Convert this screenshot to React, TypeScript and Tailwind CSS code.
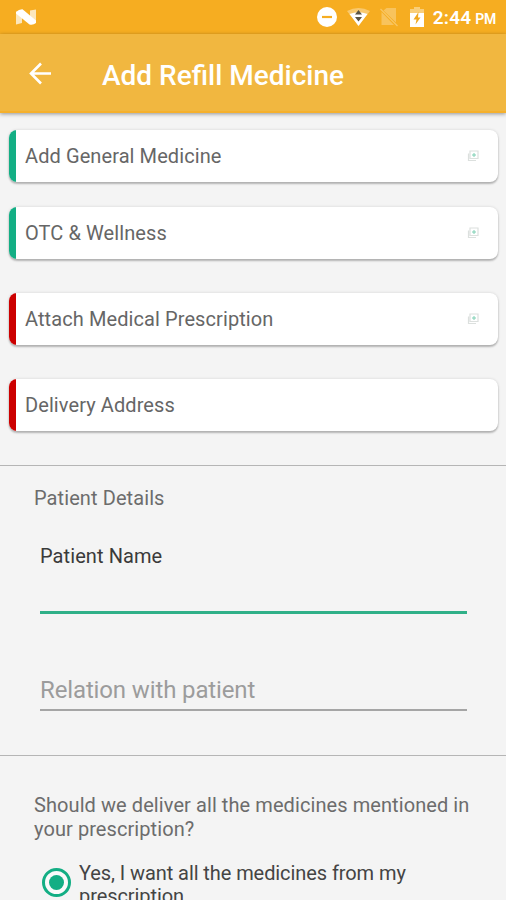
interface ActionCardProps {
  label: string
  required?: boolean
  addable?: boolean
}

const OPTIONAL_ITEMS: ActionCardProps[] = [
  { label: 'Add General Medicine', addable: true },
  { label: 'OTC & Wellness', addable: true },
]

const REQUIRED_ITEMS: ActionCardProps[] = [
  { label: 'Attach Medical Prescription', required: true, addable: true },
  { label: 'Delivery Address', required: true },
]

function StatusBar() {
  return (
    <div className="flex h-[34px] items-center bg-[#f6ad21] pl-4 pr-[10px] text-white">
      <svg width="20" height="16" viewBox="0 0 20 16">
        <path d="M0 2.5 6 4v10l-6 1.5zM14 1.500l6-1v13l-6-3z" fill="#fff" opacity="0.7" />
        <path d="M0 3Q3 0 6.500 .2L20 11.500V14Q17 16.500 13.500 15.500L0 4.500z" fill="#fff" />
      </svg>
      <div className="ml-auto flex items-center">
        <svg width="20" height="20" viewBox="0 0 20 20">
          <circle cx="10" cy="10" r="10" fill="#fff" />
          <path d="M5 8.9h10v2.2H5z" fill="#f6ad21" />
        </svg>
        <svg className="ml-[10px]" width="23" height="20" viewBox="0 0 23 20">
          <path d="M0 4Q11.500-2 23 4L11.500 18.500z" fill="#fff" opacity="0.35" />
          <path d="M2.500 7Q11.500 3.500 20.500 7L11.500 19z" fill="#fff" />
          <path d="M11.500 3l3.500 4.500H8zM8 10h7l-3.500 4.500z" fill="#5b5546" />
        </svg>
        <svg className="ml-[10px]" width="18" height="20" viewBox="0 0 18 20">
          <path d="M6.500 1H16v14.500L3.500 3.500zM1.500 5l12.500 13H1.500z" fill="#fff" opacity="0.27" />
          <path d="M.5 2l17 17" stroke="#fff" strokeWidth="1.3" opacity="0.3" />
        </svg>
        <svg className="ml-[12px]" width="14" height="20" viewBox="0 0 14 20">
          <path d="M4 0h6v2h4v4H0V2h4z" fill="#fff" opacity="0.4" />
          <path d="M0 6h14v14H0z" fill="#fff" />
          <path d="M8.500 5 3.500 12.500h3L5.500 17.500l5-7H8z" fill="#f0a81f" />
        </svg>
      </div>
      <div className="ml-[9px] mt-[2px] flex items-baseline font-semibold">
        <span className="text-[19px] leading-[24px] tracking-[0.2px]">2:44</span>
        <span className="ml-1 text-[14px] tracking-[-0.3px]">PM</span>
      </div>
    </div>
  )
}

function AppBar() {
  return (
    <header className="relative flex h-[79px] items-center border-b-2 border-[#f5b02c] bg-[#f1b740] pl-7 text-white shadow-[0_1px_4px_rgba(0,0,0,0.4)]">
      <button aria-label="Back">
        <svg width="24" height="24" viewBox="0 0 24 24" fill="none" stroke="currentColor" strokeWidth="2.600">
          <path d="M23 12.500H3M13 2.500 3 12.500l10 10" />
        </svg>
      </button>
      <h1 className="ml-[50px] mt-[7px] whitespace-nowrap text-[28px] font-medium leading-[32px]">Add Refill Medicine</h1>
    </header>
  )
}

function AddIcon() {
  return (
    <svg width="12" height="12" viewBox="0 0 12 12" fill="none">
      <path d="M3 1h8v7.500H3zM1.500 3.500v7H9" stroke="#dce0de" strokeWidth="1.200" />
      <path d="M7 3v4M5 5h4" stroke="#7fd0b4" />
    </svg>
  )
}

function ActionCard({ label, required, addable }: ActionCardProps) {
  return (
    <button className="flex h-[52px] w-full items-center overflow-hidden rounded-[8px] bg-white text-left shadow-[0_2px_2px_rgba(0,0,0,0.24),0_0_3px_rgba(0,0,0,0.14)]">
      <span className={required ? 'h-full w-[7px] bg-[#cc0000]' : 'h-full w-[7px] bg-[#13ae84]'} />
      <span className="ml-[9px] flex-1 text-[20px] leading-[24px] tracking-[0.09px] text-[#666]">{label}</span>
      {addable && (
        <span className="mr-[19px]">
          <AddIcon />
        </span>
      )}
    </button>
  )
}

export default function App() {
  return (
    <div className="flex h-[900px] w-[506px] flex-col overflow-hidden bg-[#f4f4f4] font-['Roboto',sans-serif]">
      <StatusBar />
      <AppBar />

      <div className="flex flex-col gap-[25px] pl-[9px] pr-2 pt-[17px]">
        {OPTIONAL_ITEMS.map((item) => (
          <ActionCard key={item.label} {...item} />
        ))}
      </div>
      <div className="flex flex-col gap-[34px] pl-[9px] pr-2 pt-[34px]">
        {REQUIRED_ITEMS.map((item) => (
          <ActionCard key={item.label} {...item} />
        ))}
      </div>

      <section className="mt-[34px] h-[290px] shrink-0 border-t border-[#b5b5b5] pt-[20px]">
        <h2 className="pl-[34px] text-[20px] leading-[24px] tracking-[0.09px] text-[#6c6c6c]">Patient Details</h2>
        <div className="ml-10 mr-[39px] mt-[34px] h-[70px] border-b-[3px] border-[#30b088]">
          <label className="block text-[20px] leading-[24px] tracking-[0.09px] text-[#3a3a3a]">Patient Name</label>
        </div>
        <div className="ml-10 mr-[39px] mt-[62px] h-[35px] border-b-2 border-[#a5a5a5] text-[24px] leading-[28px] tracking-[-0.130px] text-[#9c9c9c]">
          Relation with patient
        </div>
      </section>

      <section className="h-[145px] shrink-0 border-t border-[#b5b5b5] pt-[37px]">
        <p className="pl-[34px] text-[20px] leading-[24px] tracking-[0.08px] text-[#6c6c6c]">
          <span className="block whitespace-nowrap">Should we deliver all the medicines mentioned in</span>
          <span className="block">your prescription?</span>
        </p>
        <div className="ml-[42px] mt-[21px] flex">
          <span className="mt-[6px] flex size-[29px] shrink-0 items-center justify-center rounded-full border-[3px] border-[#13ae84] bg-[#fafafa]">
            <span className="size-[15px] rounded-full bg-[#13ae84]" />
          </span>
          <p className="ml-2 text-[20px] leading-[23px] tracking-[-0.080px] text-[#444]">
            <span className="block whitespace-nowrap">Yes, I want all the medicines from my</span>
            <span className="block">prescription</span>
          </p>
        </div>
      </section>
    </div>
  )
}
